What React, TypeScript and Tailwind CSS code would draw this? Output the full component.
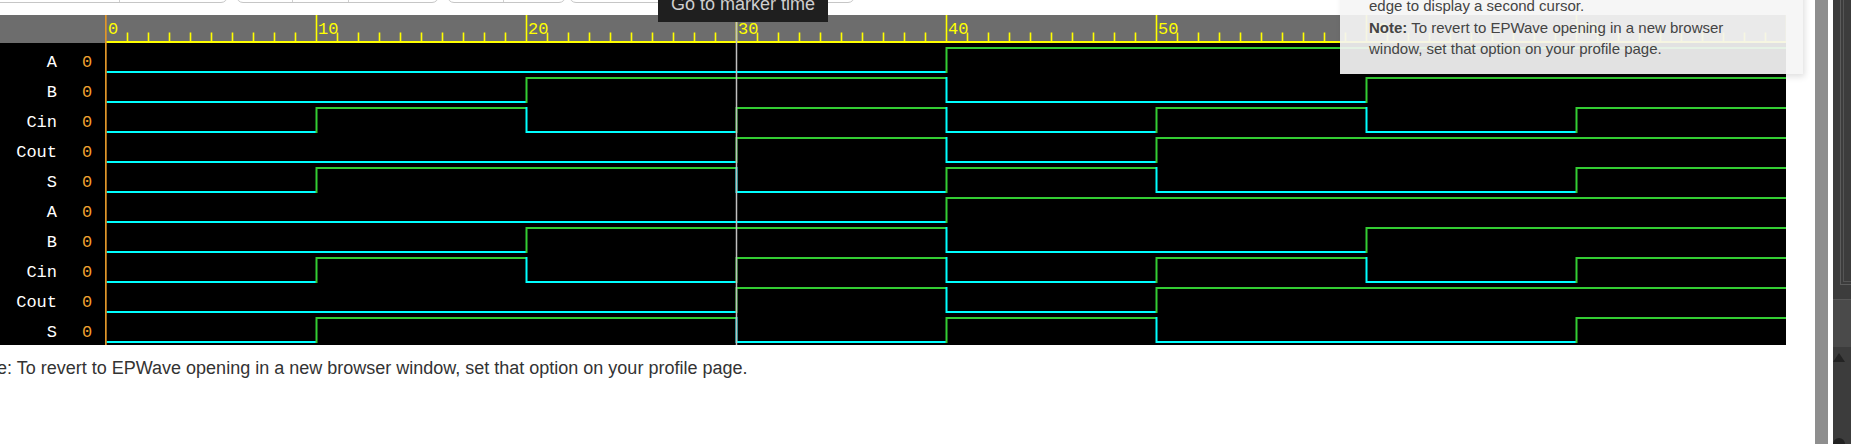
const UNIT = 21;
const END = 80;

const signals = [
  { name: "A", flips: [40] },
  { name: "B", flips: [20, 40, 60] },
  { name: "Cin", flips: [10, 20, 30, 40, 50, 60, 70] },
  { name: "Cout", flips: [30, 40, 50] },
  { name: "S", flips: [10, 30, 40, 50, 70] },
];
const rows = [...signals, ...signals];

const HIGH = "#33cc33";
const LOW = "#00ffff";
const YELLOW = "#ffff00";
const ORANGE = "#e0962a";
const MARKER = 30;

function TabStrip() {
  return (
    <div className="flex h-[15px]">
      <div className="ml-[-20px] mt-[-7px] flex h-[10px] w-[248px] rounded-b-[7px] border border-[#c6c6c6] bg-white">
        <div className="w-[139px] border-r border-[#d0d0d0]" />
      </div>
      <div className="ml-[8px] mt-[-7px] flex h-[10px] w-[203px] rounded-b-[7px] border border-[#c6c6c6] bg-white">
        <div className="w-[56px] border-r border-[#d0d0d0]" />
        <div className="w-[56px] border-r border-[#d0d0d0]" />
      </div>
      <div className="ml-[8px] mt-[-7px] flex h-[10px] w-[119px] rounded-b-[7px] border border-[#c6c6c6] bg-white">
        <div className="w-[56px] border-r border-[#d0d0d0]" />
      </div>
      <div className="ml-[3px] mt-[-7px] h-[10px] w-[286px] rounded-b-[7px] border border-[#c6c6c6] bg-white" />
    </div>
  );
}

function Ruler() {
  const px = (t: number) => 106.5 + UNIT * t;
  const ticks = Array.from({ length: END + 1 }, (_, t) => t);
  return (
    <svg width={1786} height={28} className="block">
      <rect x={0} y={0} width={1786} height={28} fill="#6d6d6d" />
      {ticks.map((t) =>
        t === 0 ? null : t % 10 === 0 ? (
          <rect key={t} x={px(t) - 0.8} y={0} width={1.6} height={26} fill={YELLOW} />
        ) : (
          <rect key={t} x={px(t) - 0.8} y={17.5} width={1.6} height={8.5} fill={YELLOW} />
        ),
      )}
      {ticks
        .filter((t) => t % 10 === 0)
        .map((t) => (
          <text
            key={`l${t}`}
            x={px(t) + 1.5}
            y={18.5}
            fill={YELLOW}
            fontSize={17}
            fontFamily="'Liberation Mono', monospace"
          >
            {t}
          </text>
        ))}
      <rect x={106} y={26} width={1680} height={2} fill={YELLOW} />
      <rect x={px(MARKER) - 0.75} y={0} width={1.5} height={28} fill="#c8c8b8" />
      <rect x={105} y={0} width={1.7} height={28} fill={ORANGE} />
    </svg>
  );
}

function Waves() {
  const px = (t: number) => 2.5 + UNIT * t;
  const lines: JSX.Element[] = [];
  rows.forEach((sig, i) => {
    const top = 2 + 30 * i;
    const yHigh = top + 3;
    const yLow = top + 27;
    const times = [0, ...sig.flips, END];
    for (let k = 0; k < times.length - 1; k++) {
      const high = k % 2 === 1;
      lines.push(
        <line
          key={`h${i}-${k}`}
          x1={px(times[k])}
          x2={px(times[k + 1])}
          y1={high ? yHigh : yLow}
          y2={high ? yHigh : yLow}
          stroke={high ? HIGH : LOW}
          strokeWidth={2}
        />,
      );
    }
    sig.flips.forEach((t, k) => {
      const rising = k % 2 === 0;
      lines.push(
        <line
          key={`v${i}-${k}`}
          x1={px(t)}
          x2={px(t)}
          y1={yLow + 1}
          y2={yHigh - 1}
          stroke={rising ? HIGH : LOW}
          strokeWidth={2}
        />,
      );
    });
  });
  return (
    <svg width={1682} height={302} className="block">
      {lines}
      <rect x={px(MARKER) - 0.75} y={0} width={1.5} height={302} fill="#c0c0c0" />
      <rect x={1} y={0} width={1.7} height={302} fill={ORANGE} />
    </svg>
  );
}

function Labels() {
  return (
    <div className="w-[104px] shrink-0 pt-[5px] font-['Liberation_Mono',monospace] text-[17px] leading-[30px]">
      {rows.map((sig, i) => (
        <div key={i} className="flex h-[30px]">
          <span className="w-[57px] text-right text-white">{sig.name}</span>
          <span className="ml-[25px] text-[#f0a030]">0</span>
        </div>
      ))}
    </div>
  );
}

function SidePanel() {
  return (
    <div className="flex w-[18px] shrink-0 flex-col bg-[#3c3c3c]">
      <div className="h-[300px] border-b border-[#575757] pl-[7px]">
        <div className="h-[285px] border-b border-l border-[#5c5c5c] pl-[2px]">
          <div className="h-[282px] border-b border-l border-[#555]" />
        </div>
      </div>
      <div className="h-[47px] bg-[#4a4a4a]" />
      <div className="flex h-[20px] items-center">
        <div className="h-0 w-0 border-x-[6px] border-b-[9px] border-x-transparent border-b-[#232323]" />
      </div>
      <div className="flex-1" />
      <div className="h-[6px] w-[12px] rounded-t-full bg-[#222]" />
    </div>
  );
}

export default function App() {
  return (
    <div className="relative flex h-[444px] w-[1851px] overflow-hidden bg-white font-['Liberation_Sans',Arial,sans-serif]">
      <div className="w-[1815px] shrink-0">
        <TabStrip />
        <div className="w-[1786px]">
          <Ruler />
          <div className="flex h-[302px] bg-black">
            <Labels />
            <Waves />
          </div>
        </div>
        <p className="ml-[-31px] mt-[13px] whitespace-nowrap text-[18px] leading-[21px] text-[#333]">
          Note: To revert to EPWave opening in a new browser window, set that option on your profile page.
        </p>
      </div>
      <div className="w-[13px] shrink-0 bg-[#8e8e8e]" />
      <div className="w-[5px] shrink-0" />
      <SidePanel />

      <div className="absolute left-[658px] top-[-16px] h-[38px] w-[170px] bg-[#1f1f1f] pl-[13px] pt-[11px] text-[18px] leading-[18px] text-[#cfcfcf]">
        Go to marker time
      </div>

      <div className="absolute left-[1340px] top-[-18px] w-[463px] bg-[#f5f5f5]/[0.92] pb-[14px] pl-[29px] pr-[39px] pt-[13px] text-[15px] leading-[21.5px] text-[#444] shadow-[2px_3px_6px_rgba(0,0,0,0.12)]">
        <p>edge to display a second cursor.</p>
        <p>
          <b>Note:</b> To revert to EPWave opening in a new browser window, set that option on your profile page.
        </p>
      </div>
    </div>
  );
}
